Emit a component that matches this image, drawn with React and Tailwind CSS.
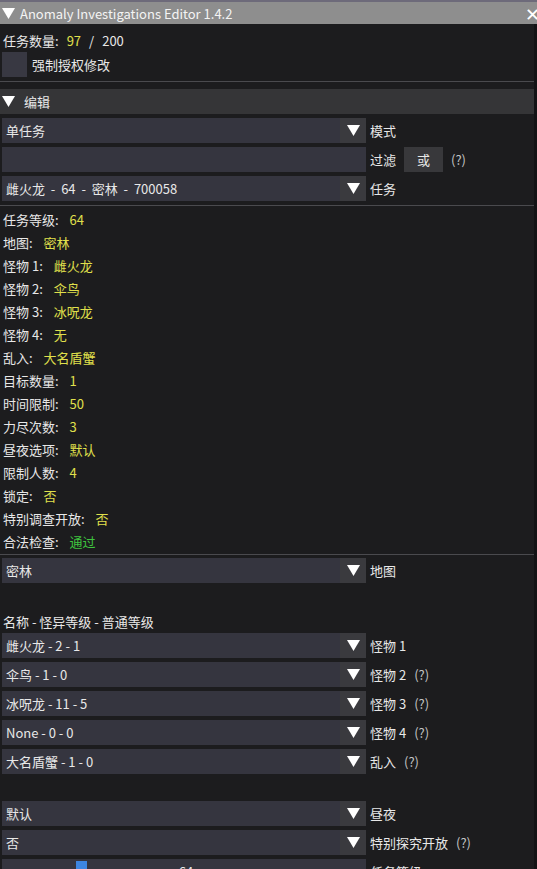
const FONT = { fontFamily: '"Noto Sans CJK SC", "Noto Sans", sans-serif' };

function Tri({ className = "" }) {
  return (
    <svg width="13" height="11" viewBox="0 0 13 11" className={className}>
      <polygon points="0,0 13,0 6.5,11" fill="#ffffff" />
    </svg>
  );
}

function Help() {
  return <span className="ml-2 text-[#c4c4c4]">(?)</span>;
}

function Combo({ value, label, help, mt = "mt-1" }) {
  return (
    <div className={`flex items-center h-[25px] ${mt}`}>
      <div className="ml-[2px] w-[364px] h-full flex bg-[#35353f]">
        <div className="flex-1 flex items-center pl-1 text-[#e8e8e8] whitespace-pre">{value}</div>
        <div className="w-[26px] h-full flex items-center justify-center bg-[#3a3a3e]">
          <Tri />
        </div>
      </div>
      <span className="ml-1 text-[#e8e8e8] whitespace-nowrap">{label}</span>
      {help && <Help />}
    </div>
  );
}

function Sep({ mt }) {
  return <div className={`h-px bg-[#4a4a4e] mr-[3px] ${mt}`} />;
}

const info = [
  ["任务等级: ", "64"],
  ["地图: ", "密林"],
  ["怪物 1: ", "雌火龙"],
  ["怪物 2: ", "伞鸟"],
  ["怪物 3: ", "冰呪龙"],
  ["怪物 4: ", "无"],
  ["乱入: ", "大名盾蟹"],
  ["目标数量: ", "1"],
  ["时间限制: ", "50"],
  ["力尽次数: ", "3"],
  ["昼夜选项: ", "默认"],
  ["限制人数: ", "4"],
  ["锁定: ", "否"],
  ["特别调查开放: ", "否"],
  ["合法检查: ", "通过", true],
];

const monsters = [
  ["雌火龙 - 2 - 1", "怪物 1", false],
  ["伞鸟 - 1 - 0", "怪物 2", true],
  ["冰呪龙 - 11 - 5", "怪物 3", true],
  ["None - 0 - 0", "怪物 4", true],
  ["大名盾蟹 - 1 - 0", "乱入", true],
];

export default function App() {
  return (
    <div className="w-[537px] h-[869px] overflow-hidden bg-[#1c1c1e] text-[13px] leading-none relative" style={FONT}>
      {/* title bar */}
      <div className="h-6 bg-[#8e8e8e] border-t-2 border-[#6d6a7a] flex items-center text-white">
        <Tri className="ml-[2px] mr-[5px]" />
        <span className="text-[13px] text-[#f4f4f4]">Anomaly Investigations Editor 1.4.2</span>
        <span className="ml-auto mr-[-3px] text-[18px] font-light text-white">✕</span>
      </div>

      <div className="absolute right-0 top-6 bottom-0 w-[3px] bg-[#131315]" />

      <div className="mt-1 h-6 flex items-center pl-[3px] text-[#e8e8e8]">
        <span>任务数量: </span>
        <span className="ml-2 text-[#e0e04c]">97</span>
        <span className="ml-2">/</span>
        <span className="ml-2">200</span>
      </div>

      <div className="h-[25px] flex items-center">
        <div className="ml-[2px] w-[25px] h-[25px] bg-[#383842]" />
        <span className="ml-[5px] text-[#e8e8e8]">强制授权修改</span>
      </div>

      <Sep mt="mt-1" />

      <div className="mt-[7px] h-[25px] mr-[3px] bg-[#353537] flex items-center text-[#e8e8e8]">
        <Tri className="ml-[2px] mr-[9px]" />
        <span>编辑</span>
      </div>

      <Combo value="单任务" label="模式" />
      <div className="flex items-center h-[25px] mt-1">
        <div className="ml-[2px] w-[364px] h-full bg-[#35353f]" />
        <span className="ml-1 text-[#e8e8e8]">过滤</span>
        <div className="ml-2 w-[39px] h-full bg-[#38383b] flex items-center justify-center text-[#e8e8e8]">或</div>
        <Help />
      </div>
      <Combo value="雌火龙  -  64  -  密林  -  700058" label="任务" />

      <Sep mt="mt-1" />

      <div className="mt-[2px]">
        {info.map(([k, v, ok]) => (
          <div key={k} className="h-[23px] flex items-center pl-[3px] text-[#e8e8e8] whitespace-pre">
            <span>{k}</span>
            <span className={`ml-2 ${ok ? "text-[#3fc43f]" : "text-[#e0e04c]"}`}>{v}</span>
          </div>
        ))}
      </div>

      <Sep mt="mt-px" />

      <Combo value="密林" label="地图" mt="mt-[3px]" />

      <div className="mt-[27px] h-[23px] flex items-center pl-[3px] text-[#e8e8e8]">
        名称 - 怪异等级 - 普通等级
      </div>
      {monsters.map(([v, l, h], i) => (
        <Combo key={l} value={v} label={l} help={h} mt={i === 0 ? "mt-0" : "mt-1"} />
      ))}

      <Combo value="默认" label="昼夜" mt="mt-[27px]" />
      <Combo value="否" label="特别探究开放" help />

      <div className="flex items-center h-[25px] mt-1">
        <div className="ml-[2px] w-[364px] h-full bg-[#35353f] relative flex items-center justify-center text-[#e8e8e8]">
          <div className="absolute left-[74px] top-[2px] w-[11px] h-[21px] bg-[#3d85e0]" />
          <span className="ml-[4px]">64</span>
        </div>
        <span className="ml-1 text-[#e8e8e8]">任务等级</span>
      </div>
    </div>
  );
}
